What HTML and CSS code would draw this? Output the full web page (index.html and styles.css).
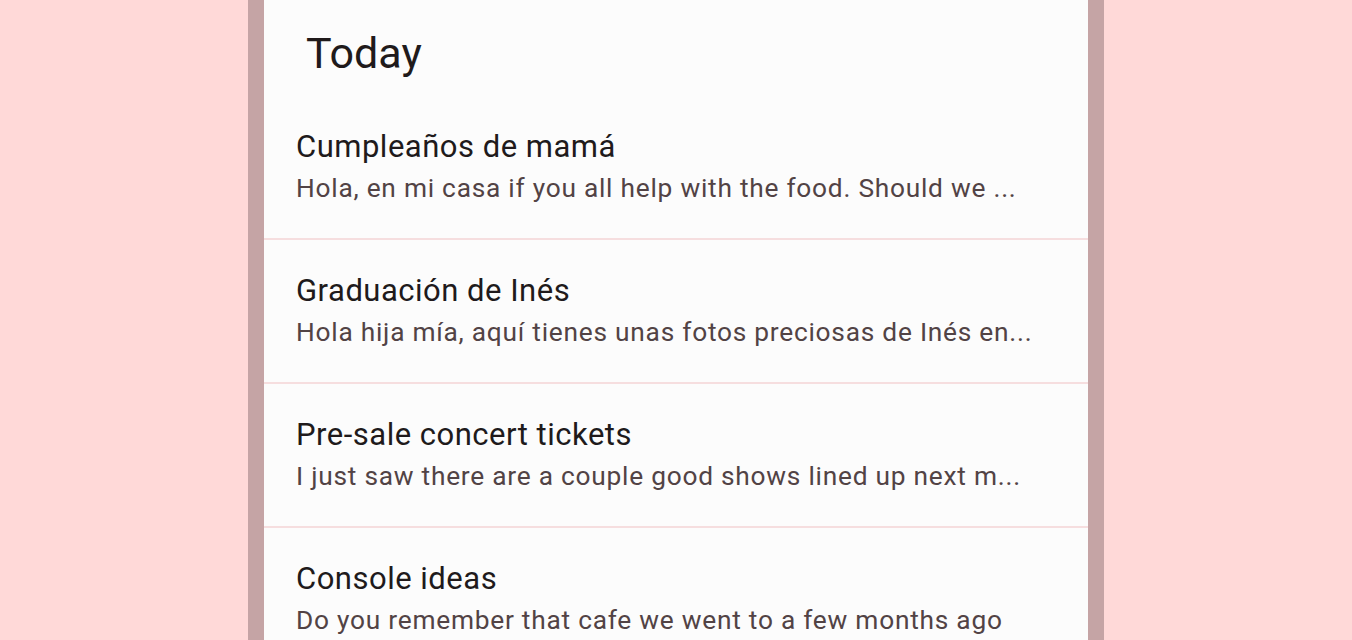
FILE: index.html
```html
<!DOCTYPE html>
<html lang="en">
<head>
<meta charset="utf-8">
<link rel="stylesheet" href="styles.css">
</head>
<body>
<div class="frame">
  <div class="card">
    <h1 class="heading">Today</h1>
    <ul class="list">
      <li class="item">
        <div class="title">Cumpleaños de mamá</div>
        <div class="sub">Hola, en mi casa if you all help with the food. Should we ...</div>
      </li>
      <li class="item">
        <div class="title">Graduación de Inés</div>
        <div class="sub">Hola hija mía, aquí tienes unas fotos preciosas de Inés en...</div>
      </li>
      <li class="item">
        <div class="title">Pre-sale concert tickets</div>
        <div class="sub">I just saw there are a couple good shows lined up next m...</div>
      </li>
      <li class="item">
        <div class="title">Console ideas</div>
        <div class="sub">Do you remember that cafe we went to a few months ago</div>
      </li>
    </ul>
  </div>
</div>
</body>
</html>
```

FILE: styles.css
```css
html, body {
  margin: 0;
  padding: 0;
  height: 100%;
  overflow: hidden;
}
body {
  background: #ffd9d8;
  font-family: Roboto, "Liberation Sans", sans-serif;
  display: flex;
  justify-content: center;
}
.frame {
  width: 824px;
  border-left: 16px solid #c5a4a5;
  border-right: 16px solid #c5a4a5;
  background: #fcfcfc;
  min-height: 100%;
}
.card {
  display: flex;
  flex-direction: column;
}
.heading {
  margin: 0;
  height: 96px;
  box-sizing: border-box;
  padding: 27px 0 0 42px;
  font-size: 43px;
  line-height: 52px;
  letter-spacing: 0;
  font-weight: 400;
  color: #201a1b;
}
.list {
  list-style: none;
  margin: 0;
  padding: 0;
}
.item {
  height: 144px;
  box-sizing: border-box;
  padding: 33px 32px 0 32px;
  border-bottom: 2px solid #f6dedf;
}
.title {
  font-size: 31px;
  line-height: 36px;
  letter-spacing: 0.5px;
  color: #201a1b;
}
.sub {
  margin-top: 7px;
  font-size: 26.3px;
  line-height: 32px;
  letter-spacing: 0.75px;
  color: #524345;
  white-space: nowrap;
}
```
